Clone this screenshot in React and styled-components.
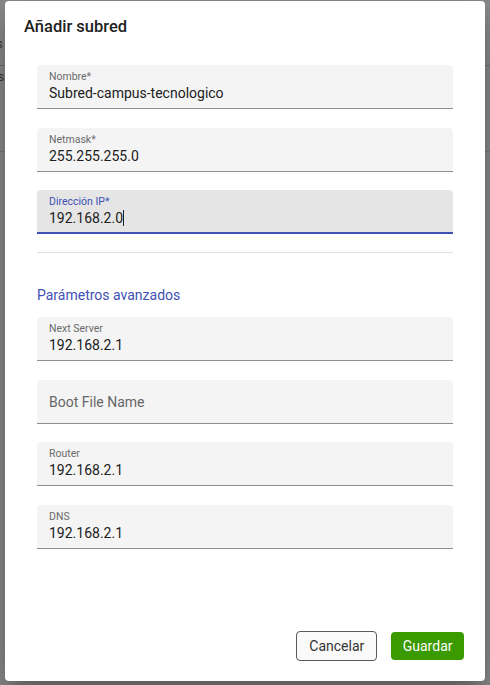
import React from "react";
import styled, { createGlobalStyle } from "styled-components";

const Global = createGlobalStyle`
  html, body { margin: 0; padding: 0; }
  body {
    font-family: Roboto, "Noto Sans", "Liberation Sans", sans-serif;
    background: #8c8c8c;
    overflow: hidden;
  }
  * { box-sizing: border-box; }
`;

const Page = styled.div`
  position: relative;
  width: 490px;
  height: 685px;
  background: #8c8c8c;
  overflow: hidden;
`;

const BehindHeader = styled.div`
  height: 66px;
  border-bottom: 1px solid #707070;
  display: flex;
  align-items: flex-start;
  padding-top: 36px;
  font-size: 13px;
  line-height: 16px;
  color: #3a3a3a;
  margin-left: -4px;
`;

const BehindRow = styled.div`
  height: 86px;
  border-bottom: 1px solid #7a7a7a;
  padding-top: 4px;
  font-size: 12px;
  color: #3a3a3a;
  margin-left: -2px;
`;

const Overlay = styled.div`
  position: absolute;
  inset: 0;
  display: flex;
  justify-content: center;
  align-items: flex-start;
  padding-top: 1px;
`;

const Dialog = styled.div`
  width: 480px;
  height: 680px;
  background: #fff;
  border-radius: 4px;
  box-shadow: 0 11px 15px -7px rgba(0, 0, 0, 0.2),
    0 24px 38px 3px rgba(0, 0, 0, 0.14), 0 9px 46px 8px rgba(0, 0, 0, 0.12);
  display: flex;
  flex-direction: column;
`;

const Title = styled.h2`
  margin: 0;
  padding: 14px 19px 0;
  font-size: 16.5px;
  line-height: 24px;
  font-weight: 500;
  color: #212121;
`;

const Content = styled.div`
  flex: 1;
  padding: 26px 32px 0;
  display: flex;
  flex-direction: column;
`;

const FieldGroup = styled.div`
  display: flex;
  flex-direction: column;
  gap: 18.5px;
`;

const Field = styled.div`
  position: relative;
  height: 44px;
  background: ${(p) => (p.$focused ? "#e5e5e5" : "#f4f4f4")};
  border-radius: 4px 4px 0 0;
  border-bottom: 1px solid #8f8f8f;
  padding: 6px 12px 0;
  display: flex;
  flex-direction: column;
  justify-content: ${(p) => (p.$empty ? "center" : "flex-start")};
  ${(p) => p.$empty && "padding-top: 0;"}

  &::after {
    content: "";
    display: ${(p) => (p.$focused ? "block" : "none")};
    position: absolute;
    left: 0;
    right: 0;
    bottom: -1px;
    height: 2px;
    background: #3f51b5;
  }
`;

const Label = styled.label`
  font-size: 10.5px;
  line-height: 12px;
  color: ${(p) => (p.$focused ? "#3f51b5" : "#6b6b6b")};
`;

const Placeholder = styled.span`
  font-size: 14px;
  line-height: 20px;
  color: #666;
  margin-top: 1px;
`;

const Value = styled.div`
  font-size: 14px;
  line-height: 20px;
  color: #212121;
  display: flex;
  align-items: center;
`;

const Caret = styled.span`
  display: inline-block;
  width: 1px;
  height: 16px;
  background: #212121;
  margin-left: 0;
`;

const Divider = styled.hr`
  margin: 18px 0 0;
  border: none;
  border-top: 1px solid #e0e0e0;
`;

const SectionTitle = styled.div`
  margin: 32px 0 12px;
  font-size: 14px;
  line-height: 20px;
  color: #3f51b5;
`;

const Actions = styled.div`
  display: flex;
  justify-content: flex-end;
  align-items: center;
  gap: 14px;
  padding: 0 21px 20px;
`;

const Button = styled.button`
  font-family: inherit;
  font-size: 14px;
  line-height: 20px;
  height: ${(p) => (p.$primary ? "28px" : "30px")};
  padding: 0 ${(p) => (p.$primary ? "11.5px" : "12px")};
  border-radius: 4px;
  cursor: pointer;
  border: ${(p) => (p.$primary ? "none" : "1px solid #5a5a5a")};
  background: ${(p) => (p.$primary ? "#3a9a00" : "#fafafa")};
  color: ${(p) => (p.$primary ? "#fff" : "#333")};
`;

function TextField({ label, value, focused }) {
  if (!value) {
    return (
      <Field $empty>
        <Placeholder>{label}</Placeholder>
      </Field>
    );
  }
  return (
    <Field $focused={focused}>
      <Label $focused={focused}>{label}</Label>
      <Value>
        {value}
        {focused && <Caret />}
      </Value>
    </Field>
  );
}

export default function App() {
  return (
    <>
      <Global />
      <Page>
        <BehindHeader>s</BehindHeader>
        <BehindRow>sa</BehindRow>
        <Overlay>
          <Dialog role="dialog">
            <Title>Añadir subred</Title>
            <Content>
              <FieldGroup>
                <TextField label="Nombre*" value="Subred-campus-tecnologico" />
                <TextField label="Netmask*" value="255.255.255.0" />
                <TextField label="Dirección IP*" value="192.168.2.0" focused />
              </FieldGroup>
              <Divider />
              <SectionTitle>Parámetros avanzados</SectionTitle>
              <FieldGroup>
                <TextField label="Next Server" value="192.168.2.1" />
                <TextField label="Boot File Name" value="" />
                <TextField label="Router" value="192.168.2.1" />
                <TextField label="DNS" value="192.168.2.1" />
              </FieldGroup>
            </Content>
            <Actions>
              <Button>Cancelar</Button>
              <Button $primary>Guardar</Button>
            </Actions>
          </Dialog>
        </Overlay>
      </Page>
    </>
  );
}
